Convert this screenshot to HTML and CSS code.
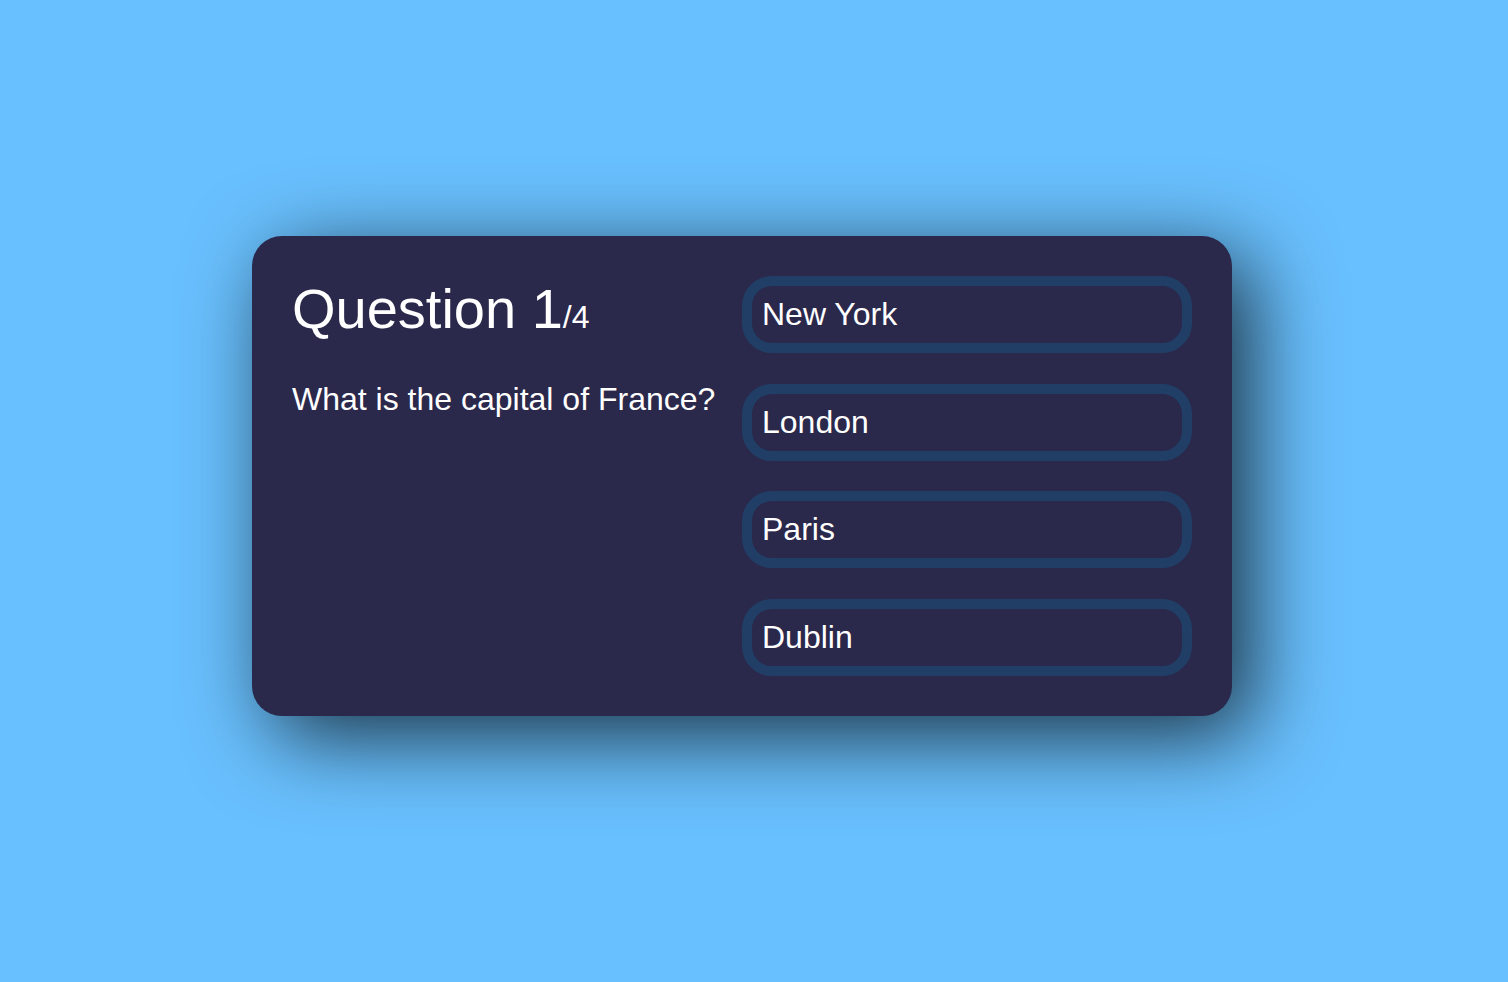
FILE: index.html
```html
<!DOCTYPE html>
<html lang="en">
<head>
<meta charset="utf-8">
<title>Quiz</title>
<link rel="stylesheet" href="styles.css">
</head>
<body>
<div class="app">
  <div class="question-section">
    <div class="question-count"><span>Question 1</span>/4</div>
    <div class="question-text">What is the capital of France?</div>
  </div>
  <div class="answer-section">
    <button class="answer">New York</button>
    <button class="answer">London</button>
    <button class="answer">Paris</button>
    <button class="answer">Dublin</button>
  </div>
</div>
</body>
</html>
```
FILE: styles.css
```css
html, body {
  margin: 0;
  padding: 0;
}
body {
  background-color: #69c0fe;
  font-family: "Liberation Sans", Arial, sans-serif;
  color: #ffffff;
  min-height: 100vh;
  box-sizing: border-box;
  display: flex;
  justify-content: center;
  align-items: center;
  padding: 0 24px 30px 0;
}
.app {
  background-color: #2a284b;
  width: 900px;
  min-height: 400px;
  border-radius: 30px;
  padding: 40px;
  box-shadow: 20px 20px 84px 0 rgba(0, 0, 0, 0.75);
  display: flex;
  justify-content: space-evenly;
}
.question-section {
  width: 100%;
  font-size: 32px;
}
.question-count {
  margin-bottom: 40px;
}
.question-count span {
  font-size: 56px;
}
.question-text {
  margin-bottom: 24px;
}
.answer-section {
  width: 100%;
  display: flex;
  flex-direction: column;
  justify-content: space-between;
}
.answer {
  width: 100%;
  box-sizing: border-box;
  font-family: "Liberation Sans", Arial, sans-serif;
  font-size: 32px;
  color: #ffffff;
  background-color: #2a284b;
  border-radius: 30px;
  display: flex;
  padding: 10px;
  justify-content: flex-start;
  align-items: center;
  border: 10px solid #213f66;
  cursor: pointer;
}
```
